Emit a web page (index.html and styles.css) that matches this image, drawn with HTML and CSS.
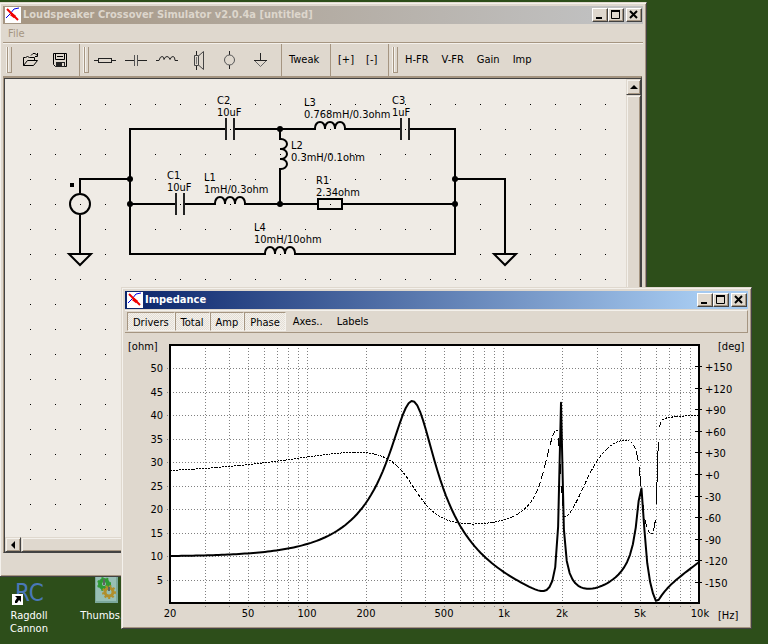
FILE: index.html
```
<!DOCTYPE html>
<html lang="en">
<head>
<meta charset="utf-8">
<title>Loudspeaker Crossover Simulator</title>
<link rel="stylesheet" href="styles.css">
</head>
<body>
<div class="desktop">

  <div class="shortcuts">
    <a class="shortcut" href="#ragdoll">
      <svg width="40" height="34" viewBox="0 0 40 34" aria-hidden="true">
        <text class="rc" x="6" y="30">RC</text>
        <rect x="3" y="23" width="11" height="11" fill="#fff" stroke="none"/>
        <path d="M6 25H12V31L10 29L8 32H6V30L8 27Z" fill="#000"/>
      </svg>
      <span>Ragdoll Cannon</span>
    </a>
    <a class="shortcut" href="#thumbs">
      <svg width="34" height="34" viewBox="0 0 34 34" aria-hidden="true">
        <rect x="4" y="1" width="23" height="31" fill="#7ba79b"/>
        <rect x="5" y="1" width="20" height="29" fill="#98bfb5"/>
        <circle cx="13" cy="13" r="4" fill="none" stroke="#2f9a34" stroke-width="4"/>
        <circle cx="13" cy="13" r="6" fill="none" stroke="#2f9a34" stroke-width="2" stroke-dasharray="2 3"/>
        <circle cx="18" cy="21" r="4" fill="none" stroke="#b08f2c" stroke-width="3"/>
        <circle cx="18" cy="21" r="6" fill="none" stroke="#b08f2c" stroke-width="2" stroke-dasharray="2 2"/>
        <path d="M13 8v6M18 16v4" stroke="#5f6660" stroke-width="2"/>
      </svg>
      <span>Thumbs.db</span>
    </a>
  </div>

  <section class="window main-window">
    <header class="titlebar inactive">
      <svg class="app-icon" width="16" height="16" viewBox="0 0 16 16" aria-hidden="true">
        <rect width="16" height="16" fill="#fff"/>
        <path d="M1 11L5 7L9 2L14 1" fill="none" stroke="#0000e8" stroke-width="1"/>
        <path d="M2 2L7 7L13 13" fill="none" stroke="#f00000" stroke-width="2"/>
        <path d="M6 7L10 10" stroke="#f00000" stroke-width="3"/>
      </svg>
      <h1>Loudspeaker Crossover Simulator v2.0.4a [untitled]</h1>
      <div class="caption-buttons">
        <button aria-label="Minimize"><svg width="12" height="10"><path d="M2 8h6" stroke="#000" stroke-width="2"/></svg></button>
        <button aria-label="Maximize"><svg width="12" height="10"><path d="M1 1h9" stroke="#000" stroke-width="2"/><path d="M1.500 1v7.500h8v-7.500" fill="none" stroke="#000"/></svg></button>
        <button class="close" aria-label="Close"><svg width="12" height="10"><path d="M2 1l7 7M9 1l-7 7" stroke="#000" stroke-width="2"/></svg></button>
      </div>
    </header>
    <nav class="menubar"><button>File</button></nav>
    <div class="toolbar">
      <div class="band files">
        <i class="grip"></i>
        <button aria-label="Open"><svg width="20" height="18" viewBox="0 0 20 18"><path d="M3.500 14.500V6.500H5.500L7.500 5.500L9.500 6.500H14.500V9M3.500 14.500L7.500 9.500H17.500L13.500 14.500ZM11 4.500L13 2.500H15L17.500 4.500M17.500 2V5.500H15" fill="none" stroke="#000"/></svg></button>
        <button aria-label="Save"><svg width="20" height="18" viewBox="0 0 20 18"><path d="M3.500 2.500H16.500V15.500H5.500L3.500 13.500ZM5.500 2.500V8.500H14.500V2.500M7 5.500h6" fill="none" stroke="#000"/><path d="M6 11h9v5H6z" fill="#222"/><path d="M12 12h2v3h-2z" fill="#dfd8ce"/></svg></button>
      </div>
      <div class="band parts">
        <i class="grip"></i>
        <button aria-label="Resistor"><svg width="22" height="20" viewBox="0 0 22 20"><path d="M0 10.500h5M17 10.500h5" stroke="#222"/><rect x="4.500" y="8.500" width="13" height="4" fill="none" stroke="#222"/></svg></button>
        <button aria-label="Capacitor"><svg width="22" height="20" viewBox="0 0 22 20"><path d="M0 10.500h9M13 10.500h9" stroke="#222"/><path d="M9.500 5v11M12.500 5v11" stroke="#555"/></svg></button>
        <button aria-label="Inductor"><svg width="22" height="20" viewBox="0 0 22 20"><path d="M0 10.500h3q1-4 3-4t2 3q1-3 3-3t3 3q1-3 3-3t2 4h3" fill="none" stroke="#222"/></svg></button>
        <button aria-label="Driver"><svg width="22" height="20" viewBox="0 0 22 20"><path d="M9.500 1v5M9.500 15v5" stroke="#222"/><path d="M7.500 5.500h4v10h-4zM12 5.500l4.500-4v18l-4.500-4" fill="none" stroke="#444"/><path d="M9.500 7v7" stroke="#777"/></svg></button>
        <button aria-label="Source"><svg width="22" height="20" viewBox="0 0 22 20"><path d="M11.500 1v4M11.500 15v4" stroke="#222"/><circle cx="11.500" cy="10" r="5" fill="none" stroke="#555"/></svg></button>
        <button aria-label="Ground"><svg width="22" height="20" viewBox="0 0 22 20"><path d="M11.500 3v8M5 10.500h13" stroke="#222"/><path d="M6 11l5.500 5.500L17 11" fill="none" stroke="#666"/></svg></button>
      </div>
      <div class="band tweak"><button>Tweak</button></div>
      <div class="band zoom"><button>[+]</button><button>[-]</button></div>
      <div class="band graphs">
        <i class="grip"></i>
        <button>H-FR</button><button>V-FR</button><button>Gain</button><button>Imp</button>
      </div>
    </div>

    <div class="workspace">
      <div class="canvas">
        <svg class="schematic" width="622" height="459" viewBox="4 78 622 459" role="img" aria-label="Crossover circuit">
          <defs>
            <pattern id="dots" x="30" y="104" width="25" height="25" patternUnits="userSpaceOnUse"><rect width="1" height="1" fill="#000"/></pattern>
            <path id="coil" d="M0 1V-1A5 6 0 0 1 10 -1V0V-1A5 6 0 0 1 20 -1V0V-1A5 6 0 0 1 30 -1V1"/>
            <path id="ground" d="M-11 0H11L0 11Z"/>
          </defs>
          <rect x="30" y="104" width="596" height="433" fill="url(#dots)"/>
          <g class="wire">
            <path d="M80 193V179H130M226 129H130V254H265M234 129H315M345 129H401M409 129H455V254H295M455 179H505V254M80 215V254"/>
            <path d="M130 204H176M184 204H215M245 204H318M342 204H455M280 129V139M280 169V204"/>
            <path class="plate" d="M226 118V140M234 118V140M176 193V215M184 193V215M401 118V140M409 118V140"/>
            <use href="#coil" transform="translate(315 129)"/>
            <use href="#coil" transform="translate(215 204)"/>
            <use href="#coil" transform="translate(265 254)"/>
            <use href="#coil" transform="translate(280 139) rotate(90)"/>
            <use href="#ground" transform="translate(80 254)"/>
            <use href="#ground" transform="translate(505 254)"/>
            <rect x="318" y="199" width="24" height="10"/>
            <circle cx="80" cy="204" r="10"/>
          </g>
          <g fill="#000">
            <circle cx="130" cy="179" r="3"/><circle cx="130" cy="204" r="3"/><circle cx="280" cy="129" r="3"/>
            <circle cx="280" cy="204" r="3"/><circle cx="455" cy="179" r="3"/><circle cx="455" cy="204" r="3"/>
            <rect x="70" y="183" width="4" height="4"/>
          </g>
          <g class="label">
            <text x="217" y="104">C2</text><text x="217" y="116">10uF</text>
            <text x="304" y="106">L3</text><text x="304" y="118">0.768mH/0.3ohm</text>
            <text x="392" y="104">C3</text><text x="392" y="116">1uF</text>
            <text x="291" y="149">L2</text><text x="291" y="161">0.3mH/0.1ohm</text>
            <text x="167" y="179">C1</text><text x="167" y="191">10uF</text>
            <text x="204" y="181">L1</text><text x="204" y="193">1mH/0.3ohm</text>
            <text x="316" y="184">R1</text><text x="316" y="196">2.34ohm</text>
            <text x="254" y="231">L4</text><text x="254" y="243">10mH/10ohm</text>
          </g>
        </svg>
      </div>
      <div class="scroll vertical">
        <button aria-label="Scroll up"><svg width="8" height="4"><path d="M0 4L4 0L8 4z"/></svg></button>
        <div class="thumb"></div>
      </div>
      <div class="scroll horizontal">
        <button aria-label="Scroll left"><svg width="4" height="8"><path d="M4 0L0 4L4 8z"/></svg></button>
        <div class="thumb"></div>
      </div>
    </div>
    <footer class="statusbar"></footer>
  </section>

  <section class="window graph-window">
    <header class="titlebar">
      <svg class="app-icon" width="16" height="16" viewBox="0 0 16 16" aria-hidden="true">
        <rect width="16" height="16" fill="#fff"/>
        <path d="M1 11L5 7L9 2L14 1" fill="none" stroke="#0000e8" stroke-width="1"/>
        <path d="M2 2L7 7L13 13" fill="none" stroke="#f00000" stroke-width="2"/>
        <path d="M6 7L10 10" stroke="#f00000" stroke-width="3"/>
      </svg>
      <h2>Impedance</h2>
      <div class="caption-buttons">
        <button aria-label="Minimize"><svg width="12" height="10"><path d="M2 8h6" stroke="#000" stroke-width="2"/></svg></button>
        <button aria-label="Maximize"><svg width="12" height="10"><path d="M1 1h9" stroke="#000" stroke-width="2"/><path d="M1.500 1v7.500h8v-7.500" fill="none" stroke="#000"/></svg></button>
        <button class="close" aria-label="Close"><svg width="12" height="10"><path d="M2 1l7 7M9 1l-7 7" stroke="#000" stroke-width="2"/></svg></button>
      </div>
    </header>
    <div class="graph-tools">
      <button class="on" aria-pressed="true">Drivers</button>
      <button class="on" aria-pressed="true">Total</button>
      <button class="on" aria-pressed="true">Amp</button>
      <button class="on" aria-pressed="true">Phase</button>
      <button class="flat">Axes..</button>
      <button class="flat">Labels</button>
    </div>
    <svg class="chart" viewBox="125 333 623 292" role="img" aria-label="Impedance and phase against frequency">
      <rect x="170" y="345" width="529" height="258" fill="#fff"/>
      <path class="grid" d="M205.500 345V607M229.500 345V607M248.500 345V607M264.500 345V607M277.500 345V607M288.500 345V607M298.500 345V607M307.500 345V607M366.500 345V607M401.500 345V607M425.500 345V607M444.500 345V607M460.500 345V607M473.500 345V607M484.500 345V607M494.500 345V607M503.500 345V607M562.500 345V607M597.500 345V607M621.500 345V607M640.500 345V607M656.500 345V607M669.500 345V607M680.500 345V607M690.500 345V607"/>
      <path class="grid" d="M167 368.500H699M167 392.500H699M167 415.500H699M167 439.500H699M167 462.500H699M167 486.500H699M167 509.500H699M167 533.500H699M167 556.500H699M167 580.500H699"/>
      <path class="phase" id="phase"/>
      <path class="curve" id="amplitude"/>
      <rect class="frame" x="170" y="345" width="529" height="258"/>
      <path class="ticks" d="M695 366.500h7M695 388.500h7M695 409.500h7M695 431.500h7M695 452.500h7M695 474.500h7M695 496.500h7M695 517.500h7M695 539.500h7M695 560.500h7M695 582.500h7"/>
      <g class="label">
        <text x="128" y="350">[ohm]</text>
        <text x="718" y="350">[deg]</text>
        <text x="718" y="619">[Hz]</text>
      </g>
      <g class="label right">
        <text x="163" y="372">50</text><text x="163" y="396">45</text><text x="163" y="419">40</text><text x="163" y="443">35</text>
        <text x="163" y="466">30</text><text x="163" y="490">25</text><text x="163" y="513">20</text><text x="163" y="537">15</text>
        <text x="163" y="560">10</text><text x="163" y="584">5</text>
      </g>
      <g class="label middle">
        <text x="170" y="617">20</text><text x="248" y="617">50</text><text x="307" y="617">100</text><text x="366" y="617">200</text>
        <text x="444" y="617">500</text><text x="504" y="617">1k</text><text x="562" y="617">2k</text><text x="640" y="617">5k</text><text x="700" y="617">10k</text>
      </g>
      <g class="label">
        <text x="705" y="371">+150</text><text x="705" y="393">+120</text><text x="705" y="414">+90</text><text x="705" y="436">+60</text>
        <text x="705" y="457">+30</text><text x="705" y="479">+0</text><text x="705" y="501">-30</text><text x="705" y="522">-60</text>
        <text x="705" y="544">-90</text><text x="705" y="565">-120</text><text x="705" y="587">-150</text>
      </g>
    </svg>
  </section>
</div>
<script src="simulate.js"></script>
</body>
</html>
```
FILE: simulate.js
```
// Complex arithmetic on [re, im] pairs.
const add = (...v) => v.reduce((a, b) => [a[0] + b[0], a[1] + b[1]]);
const sub = (a, b) => [a[0] - b[0], a[1] - b[1]];
const mul = (a, b) => [a[0] * b[0] - a[1] * b[1], a[0] * b[1] + a[1] * b[0]];
const inv = a => {
  const d = a[0] * a[0] + a[1] * a[1];
  return [a[0] / d, -a[1] / d];
};

// Input impedance of the circuit, by nodal analysis at the two ends of L2.
function impedance(f) {
  const w = 2 * Math.PI * f;
  const series = (r, l, c) => inv([r, w * l - (c ? 1 / (w * c) : 0)]);
  const c2 = series(0, 0, 10e-6);
  const l3c3 = series(0.3, 0.768e-3, 1e-6);
  const l2 = series(0.1, 0.3e-3);
  const c1l1 = series(0.3, 1e-3, 10e-6);
  const l4 = series(10, 10e-3);
  const r1 = [1 / 2.34, 0];
  const top = add(c2, l3c3, l2);
  const low = add(c1l1, l2, r1);
  const det = inv(sub(mul(top, low), mul(l2, l2)));
  const vTop = mul(add(mul(c2, low), mul(l2, c1l1)), det);
  const vLow = mul(add(mul(top, c1l1), mul(l2, c2)), det);
  return inv(add(l4, mul(c2, sub([1, 0], vTop)), mul(c1l1, sub([1, 0], vLow))));
}

const STEPS = 184;
const points = [];
for (let i = 0; i <= STEPS; i++) {
  const z = impedance(20 * Math.pow(500, i / STEPS));
  points.push({
    x: 170 + 529 * i / STEPS,
    amp: 603.5 - 4.7 * Math.hypot(z[0], z[1]),
    deg: 474.5 - 0.72 * Math.atan2(z[1], z[0]) * 180 / Math.PI
  });
}

document.getElementById("amplitude").setAttribute("d",
  "M" + points.map(p => p.x.toFixed(2) + " " + p.amp.toFixed(2)).join("L"));

// Phase is dashed: only the middle part of every step is drawn.
let dashes = "";
for (let i = 1; i < points.length; i++) {
  const a = points[i - 1], b = points[i];
  const at = t => (a.x + (b.x - a.x) * t).toFixed(2) + " " + (a.deg + (b.deg - a.deg) * t).toFixed(2);
  dashes += "M" + at(0.15) + "L" + at(0.85);
}
document.getElementById("phase").setAttribute("d", dashes);
```
FILE: styles.css
```
:root {
  --face: #dfd8ce;
  --light: #f4f1ec;
  --shadow: #a59581;
  --dark: #424242;
  --paper: #efebe5;
}
* { box-sizing: border-box; }
html, body { height: 100%; }
body {
  margin: 0;
  overflow: hidden;
  font: 11px/14px "DejaVu Sans Condensed", "DejaVu Sans", sans-serif;
  color: #000;
}
button {
  padding: 0;
  border: 0;
  background: none;
  font: inherit;
  color: inherit;
}
svg { display: block; }

.desktop {
  position: relative;
  height: 100%;
  min-height: 644px;
  background: #2d4e1a;
  overflow: hidden;
}
.shortcuts {
  display: flex;
  gap: 21px;
  padding-top: 571px;
}
.shortcut {
  display: flex;
  flex-direction: column;
  align-items: center;
  gap: 4px;
  width: 58px;
  color: #fff;
  text-align: center;
  text-decoration: none;
  line-height: 13px;
}
.rc { font: 24px "DejaVu Sans Condensed", "DejaVu Sans", sans-serif; fill: #4a78b8; }

.window {
  position: absolute;
  display: flex;
  flex-direction: column;
  padding: 3px;
  background: var(--face);
  border: 1px solid;
  border-color: var(--face) var(--dark) var(--dark) var(--face);
  box-shadow: inset 1px 1px var(--light), inset -1px -1px var(--shadow);
}
.main-window { inset: 2px 121px 67px -1px; }
.graph-window { inset: 287px 16px auto 121px; }

.titlebar {
  display: flex;
  align-items: center;
  height: 18px;
  flex: none;
  padding: 0 1px 0 2px;
  gap: 2px;
  color: #fff;
  background: linear-gradient(90deg, #0a246a, #a6caf0 92%);
}
.titlebar.inactive {
  color: #ddd6cc;
  background: linear-gradient(90deg, #a59581, #c0c0c0 92%);
}
.titlebar h1, .titlebar h2 {
  flex: 1;
  margin: 0;
  font-size: 11px;
  font-weight: bold;
  white-space: nowrap;
}
.caption-buttons { display: flex; }
.caption-buttons button {
  display: flex;
  width: 16px;
  height: 14px;
  padding: 1px 0 0 1px;
  background: var(--face);
  border: 1px solid;
  border-color: #fff var(--dark) var(--dark) #fff;
  box-shadow: inset -1px -1px var(--shadow);
}
.caption-buttons .close { margin-left: 2px; }

.menubar {
  flex: none;
  height: 19px;
  padding: 3px 5px;
  color: var(--shadow);
  border-bottom: 1px solid var(--shadow);
}
.menubar button { display: block; }

.toolbar {
  display: flex;
  flex: none;
  height: 33px;
  border-top: 1px solid var(--light);
}
.band {
  display: flex;
  align-items: center;
  padding: 0 4px;
}
.band button { white-space: nowrap; }
.grip {
  flex: none;
  width: 5px;
  height: 26px;
  border: solid var(--shadow);
  border-width: 0 1px 1px;
  box-shadow: inset 1px 0 var(--light), -1px 0 var(--light);
}
.files { width: 77px; border-right: 1px solid var(--shadow); gap: 10px; }
.files .grip { margin-right: -2px; }
.parts { width: 202px; border-right: 1px solid var(--shadow); gap: 9px; }
.parts .grip { margin-right: -4px; }
.tweak { width: 49px; border-right: 1px solid var(--shadow); padding-left: 7px; }
.zoom { width: 58px; border-right: 1px solid var(--shadow); padding-left: 7px; gap: 12px; }
.graphs { gap: 13px; }
.graphs .grip { margin-right: -6px; }

.workspace {
  flex: 1;
  min-height: 0;
  display: grid;
  grid-template: 1fr 15px / 1fr 15px;
  margin-right: 1px;
  border: solid;
  border-width: 2px 1px 1px;
  border-color: var(--shadow) var(--dark) var(--dark) var(--shadow);
}
.canvas {
  min-width: 0;
  min-height: 0;
  overflow: hidden;
  background: var(--paper);
  border: solid var(--dark);
  border-width: 1px 0 0 1px;
}
.scroll { display: flex; background: var(--paper); }
.vertical { flex-direction: column; border-top: 1px solid var(--dark); }
.horizontal { grid-row: 2; border-left: 1px solid var(--dark); }
.scroll button, .thumb {
  display: flex;
  align-items: center;
  justify-content: center;
  background: var(--face);
  border: 1px solid;
  border-color: var(--face) var(--dark) var(--dark) var(--face);
  box-shadow: inset 1px 1px var(--light), inset -1px -1px var(--shadow);
}
.scroll button { width: 16px; height: 16px; flex: none; }
.vertical button { width: 15px; }
.horizontal button { height: 15px; }
.thumb { flex: 1; }
.statusbar { flex: none; height: 20px; }

.schematic { margin: -1px 0 0 -1px; }
.wire { fill: none; stroke: #000; stroke-width: 2; }
.plate { stroke: #222; }
.label { font: 11px "DejaVu Sans Condensed", "DejaVu Sans", sans-serif; fill: #000; }
.right { text-anchor: end; }
.middle { text-anchor: middle; }

.graph-tools {
  display: flex;
  flex: none;
  height: 23px;
  margin-top: 1px;
  padding: 1px 2px;
  border: solid;
  border-width: 1px 1px 1px 0;
  border-color: var(--light) var(--shadow) var(--shadow);
}
.graph-tools button { height: 19px; padding: 2px 5px 0; white-space: nowrap; }
.graph-tools .on {
  background: repeating-conic-gradient(#f4f1ec 0 25%, #e4ded5 0 50%) 0 0 / 2px 2px;
  border: 1px solid;
  border-color: var(--shadow) var(--light) var(--light) var(--shadow);
}
.graph-tools .flat { padding: 0 7px; }

.chart { width: 100%; height: auto; }
.grid { stroke: #808080; stroke-dasharray: 1 2; shape-rendering: crispEdges; }
.frame { fill: none; stroke: #000; stroke-width: 2; }
.ticks { stroke: #000; }
.curve { fill: none; stroke: #000; stroke-width: 2; stroke-linejoin: round; }
.phase { fill: none; stroke: #000; shape-rendering: crispEdges; }
```
